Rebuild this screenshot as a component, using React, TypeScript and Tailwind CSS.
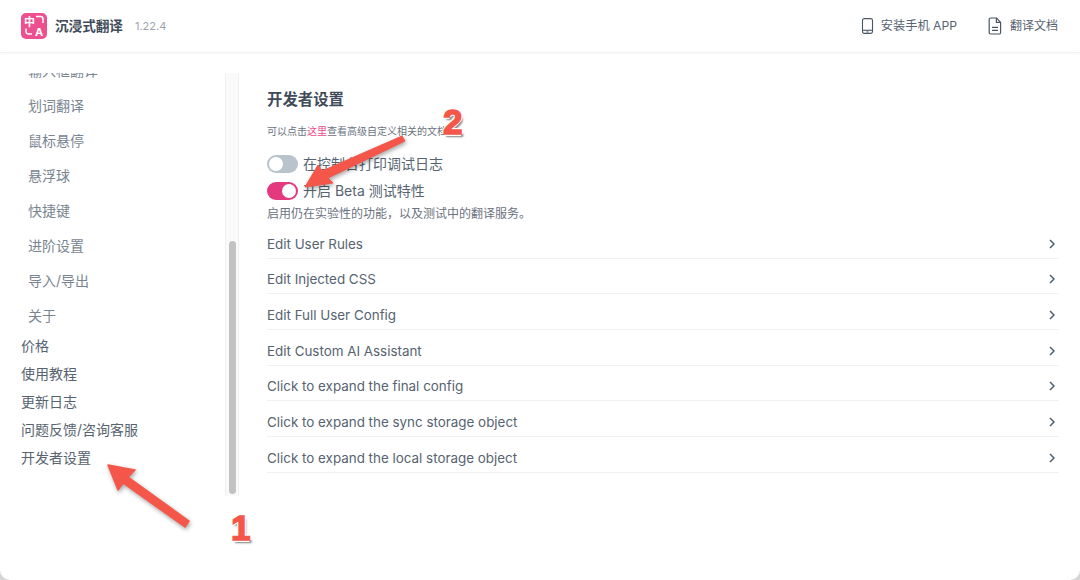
const subItems = ["输入框翻译", "划词翻译", "鼠标悬停", "悬浮球", "快捷键", "进阶设置", "导入/导出", "关于"];
const topItems = ["价格", "使用教程", "更新日志", "问题反馈/咨询客服", "开发者设置"];
const rows = [
  "Edit User Rules",
  "Edit Injected CSS",
  "Edit Full User Config",
  "Edit Custom AI Assistant",
  "Click to expand the final config",
  "Click to expand the sync storage object",
  "Click to expand the local storage object",
];

function Logo() {
  return (
    <div className="relative w-[26px] h-[26px] rounded-[5px] bg-[#ee4f8e] text-white font-bold">
      <span className="absolute left-[3px] top-[3px] text-[11px] leading-[12px]">中</span>
      <span className="absolute left-[14px] top-[15px] text-[11px] leading-[9px]">A</span>
      <svg className="absolute inset-0" width="26" height="26" viewBox="0 0 26 26" fill="none" stroke="white" strokeWidth="1.5">
        <path d="M15 3.500h4.500a2.500 2.500 0 0 1 2.500 2.500V10" />
        <path d="M5 15.500v3a2.500 2.500 0 0 0 2.500 2.500H11" />
      </svg>
    </div>
  );
}

function PhoneIcon() {
  return (
    <svg width="13" height="18" viewBox="0 0 14 18" fill="none" stroke="#4b5563" strokeWidth="1.2">
      <rect x="1.6" y="1" width="10.8" height="16" rx="2" />
      <path d="M1.6 13.6h10.8" />
      <path d="M6 15.4h2" />
    </svg>
  );
}

function DocIcon() {
  return (
    <svg width="14" height="18" viewBox="0 0 14 18" fill="none" stroke="#4b5563" strokeWidth="1.2">
      <path d="M2.6 1h6l4 4.400V15.600a1.400 1.400 0 0 1-1.400 1.400H2.600a1.400 1.400 0 0 1-1.400-1.400V2.400A1.400 1.400 0 0 1 2.600 1z" />
      <path d="M8.400 1v4.400h4.200" />
      <path d="M4 10.400h6M4 13.400h6" />
    </svg>
  );
}

function Chevron() {
  return (
    <svg width="6" height="10" viewBox="0 0 6 10" fill="none" stroke="#4b5f70" strokeWidth="1.500">
      <path d="M1 1l4 4-4 4" />
    </svg>
  );
}

function Toggle({ on }: { on?: boolean }) {
  return (
    <div className={on ? "w-[31px] h-[18px] rounded-full bg-[#e5397f] flex items-center justify-end px-[2px]" : "w-[31px] h-[18px] rounded-full bg-[#b9c3cc] flex items-center px-[2px]"}>
      <div className="w-[14px] h-[14px] rounded-full bg-white" />
    </div>
  );
}

function Annotations() {
  return (
    <>
      <svg className="absolute inset-0 pointer-events-none drop-shadow-[1px_2px_2px_rgba(0,0,0,0.35)]" width="1080" height="580" viewBox="0 0 1080 580" fill="#f4574a" stroke="#f4574a" strokeLinejoin="round">
        <path d="M108 465 135 470 128 477 189 521 185 527 123 483 118 490z" strokeWidth="1.500" />
        <path d="M305 187 318 165 322 171 402 136 405 141 328 178 333 183z" strokeWidth="1" />
      </svg>
      <span className="absolute left-[443px] top-[102px] text-[35px] leading-[40px] font-bold text-[#f4574a] [-webkit-text-stroke:1.5px_#f4574a] [text-shadow:2px_0_0_white,-2px_0_0_white,0_2px_0_white,0_-2px_0_white,2px_3px_2px_rgba(0,0,0,0.5)] font-['Liberation_Sans',sans-serif]">2</span>
      <span className="absolute left-[231px] top-[508px] text-[35px] leading-[40px] font-bold text-[#f4574a] [-webkit-text-stroke:1.5px_#f4574a] [text-shadow:2px_0_0_white,-2px_0_0_white,0_2px_0_white,0_-2px_0_white,2px_3px_2px_rgba(0,0,0,0.5)] font-['Liberation_Sans',sans-serif]">1</span>
    </>
  );
}

export default function App() {
  return (
    <div className="relative w-[1080px] h-[580px] overflow-hidden bg-[#d4d4d4] font-['Inter','Noto_Sans_CJK_SC',sans-serif]">
      <div className="w-full h-full bg-white rounded-b-[10px] flex flex-col">
        {/* Header */}
        <header className="h-[53px] shrink-0 flex items-center justify-between pl-[21px] pr-[22px] border-b border-[#f1f2f3] shadow-[0_1px_3px_rgba(0,0,0,0.03)]">
          <div className="flex items-center">
            <Logo />
            <span className="ml-[8px] text-[13.6px] font-semibold text-[#3f4b59]">沉浸式翻译</span>
            <span className="ml-[12px] text-[11px] text-[#9ca3af]">1.22.4</span>
          </div>
          <div className="flex items-center gap-[31px] text-[12px] text-[#566370]">
            <div className="flex items-center gap-[7px]">
              <PhoneIcon />
              <span className="text-[12.2px]">安装手机 APP</span>
            </div>
            <div className="flex items-center gap-[8px]">
              <DocIcon />
              <span>翻译文档</span>
            </div>
          </div>
        </header>

        <div className="flex-1 flex min-h-0">
          {/* Sidebar */}
          <aside className="w-[225px] shrink-0 mt-[20px] h-[423px] overflow-hidden">
            <div className="-mt-[20px] pl-[21px]">
              <ul className="pl-[7px] text-[14px] text-[#7a8591]">
                {subItems.map((item) => (
                  <li key={item} className="h-[35px] leading-[35px]">{item}</li>
                ))}
              </ul>
              <ul className="mt-[-1px] text-[14px] text-[#566370]">
                {topItems.map((item) => (
                  <li key={item} className="h-[28px] leading-[28px]">{item}</li>
                ))}
              </ul>
            </div>
          </aside>

          {/* Scrollbar */}
          <div className="w-[14px] shrink-0 mt-[20px] h-[423px] bg-[#fafafa] border-x border-[#f0f0f0] flex justify-center">
            <div className="w-[7px] h-[253px] mt-[168px] rounded-full bg-[#c2c2c2]" />
          </div>

          {/* Content */}
          <main className="flex-1 pl-[28px] pr-[21px] pt-[37px]">
            <h2 className="text-[15.4px] leading-[20px] font-semibold text-[#3f4b59]">开发者设置</h2>
            <p className="mt-[14px] text-[10px] leading-[14px] text-[#6b7280]">
              可以点击<span className="text-[#ea4c89]">这里</span>查看高级自定义相关的文档
            </p>
            <div className="mt-[17px] flex items-center gap-[5px] h-[18px] text-[14px] text-[#566370]">
              <Toggle />
              <span className="-mt-[2px]">在控制台打印调试日志</span>
            </div>
            <div className="mt-[9px] flex items-center gap-[5px] h-[18px] text-[14px] text-[#566370]">
              <Toggle on />
              <span className="-mt-[1px]">开启 Beta 测试特性</span>
            </div>
            <p className="mt-[5px] text-[12px] leading-[18px] text-[#6b7280]">启用仍在实验性的功能，以及测试中的翻译服务。</p>
            <div>
              {rows.map((row) => (
                <div key={row} className="h-[35.67px] pt-[7px] flex items-center justify-between pr-[4px] border-b border-[#f0f1f3] text-[13.4px] text-[#566370]">
                  <span>{row}</span>
                  <Chevron />
                </div>
              ))}
            </div>
          </main>
        </div>
      </div>
      <Annotations />
    </div>
  );
}
